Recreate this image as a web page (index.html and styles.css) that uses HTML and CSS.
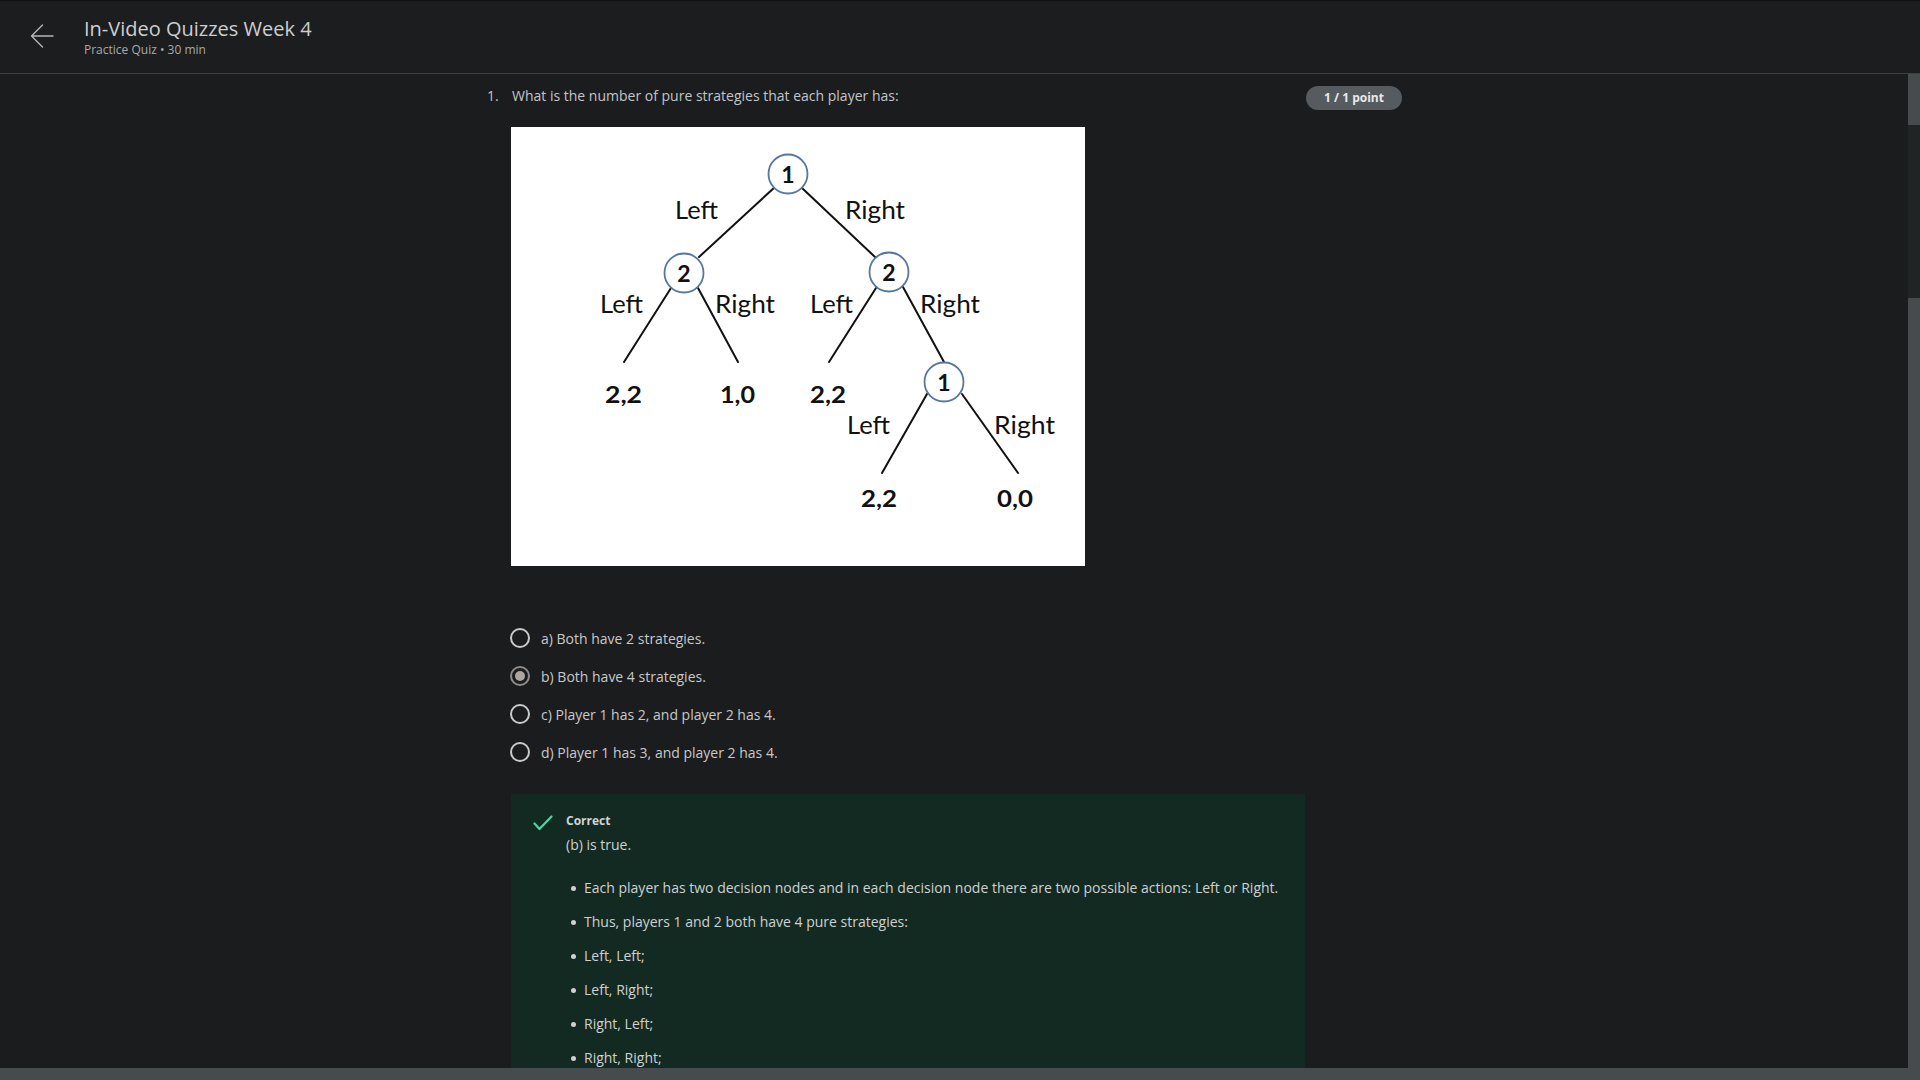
FILE: index.html
```html
<!DOCTYPE html>
<html lang="en">
<head>
<meta charset="utf-8">
<title>In-Video Quizzes Week 4</title>
<link rel="stylesheet" href="styles.css">
</head>
<body>
<header class="topbar">
  <div class="back">
    <svg width="24" height="24" viewBox="0 0 24 24" fill="none" stroke="#b4b6b8" stroke-width="1.4" stroke-linecap="round" stroke-linejoin="round"><path d="M1.5 12H23M12.5 1L1.5 12L12.5 23"/></svg>
  </div>
  <div class="titles">
    <div class="title">In-Video Quizzes Week 4</div>
    <div class="subtitle">Practice Quiz • 30 min</div>
  </div>
</header>
<div class="main">
  <div class="content">
    <div class="q-head">
      <div class="q-num">1.</div>
      <div class="q-text">What is the number of pure strategies that each player has:</div>
      <div class="badge">1 / 1 point</div>
    </div>
    <div class="q-body">
      <div class="figure">
        <svg width="574" height="439" viewBox="0 0 574 439">
          <rect width="574" height="439" fill="#ffffff"/>
          <g stroke="#111" stroke-width="2" stroke-linecap="round">
            <line x1="264" y1="60" x2="188" y2="130"/>
            <line x1="291" y1="61" x2="364" y2="130"/>
            <line x1="160" y1="161" x2="113" y2="235"/>
            <line x1="187" y1="161" x2="227" y2="235"/>
            <line x1="365" y1="161" x2="318" y2="235"/>
            <line x1="392" y1="160" x2="433" y2="235"/>
            <line x1="416" y1="267" x2="371" y2="346"/>
            <line x1="451" y1="267" x2="507" y2="346"/>
          </g>
          <g fill="#fff" stroke="#5577a0" stroke-width="1.8">
            <circle cx="277" cy="47" r="19.5"/>
            <circle cx="173" cy="146" r="19.5"/>
            <circle cx="378" cy="145" r="19.5"/>
            <circle cx="433" cy="255" r="19.5"/>
          </g>
          <g class="digit" text-anchor="middle">
            <text x="277" y="56">1</text>
            <text x="173" y="155">2</text>
            <text x="378" y="154">2</text>
            <text x="433" y="264">1</text>
          </g>
          <g class="lbl">
            <text x="164" y="92" textLength="43" lengthAdjust="spacingAndGlyphs">Left</text>
            <text x="334" y="92" textLength="60" lengthAdjust="spacingAndGlyphs">Right</text>
            <text x="89" y="186" textLength="43" lengthAdjust="spacingAndGlyphs">Left</text>
            <text x="204" y="186" textLength="60" lengthAdjust="spacingAndGlyphs">Right</text>
            <text x="299" y="186" textLength="43" lengthAdjust="spacingAndGlyphs">Left</text>
            <text x="409" y="186" textLength="60" lengthAdjust="spacingAndGlyphs">Right</text>
            <text x="336" y="307" textLength="43" lengthAdjust="spacingAndGlyphs">Left</text>
            <text x="483" y="307" textLength="61" lengthAdjust="spacingAndGlyphs">Right</text>
          </g>
          <g class="leaf">
            <text x="94" y="276" textLength="37" lengthAdjust="spacingAndGlyphs">2,2</text>
            <text x="209" y="276" textLength="35" lengthAdjust="spacingAndGlyphs">1,0</text>
            <text x="299" y="276" textLength="36" lengthAdjust="spacingAndGlyphs">2,2</text>
            <text x="350" y="380" textLength="36" lengthAdjust="spacingAndGlyphs">2,2</text>
            <text x="486" y="380" textLength="36" lengthAdjust="spacingAndGlyphs">0,0</text>
          </g>
        </svg>
      </div>
      <div class="options">
        <div class="option"><span class="radio"></span><span>a) Both have 2 strategies.</span></div>
        <div class="option"><span class="radio checked"></span><span>b) Both have 4 strategies.</span></div>
        <div class="option"><span class="radio"></span><span>c) Player 1 has 2, and player 2 has 4.</span></div>
        <div class="option"><span class="radio"></span><span>d) Player 1 has 3, and player 2 has 4.</span></div>
      </div>
      <div class="feedback">
        <div class="fb-icon">
          <svg width="20" height="16" viewBox="0 0 20 16" fill="none" stroke="#55d3a2" stroke-width="2.2" stroke-linecap="round" stroke-linejoin="round"><path d="M1.5 8.5L6.5 14L18.5 1.5"/></svg>
        </div>
        <div class="fb-body">
          <div class="fb-title">Correct</div>
          <p class="fb-text">(b) is true.</p>
          <ul class="fb-list">
            <li>Each player has two decision nodes and in each decision node there are two possible actions: Left or Right.</li>
            <li>Thus, players 1 and 2 both have 4 pure strategies:</li>
            <li>Left, Left;</li>
            <li>Left, Right;</li>
            <li>Right, Left;</li>
            <li>Right, Right;</li>
            <li>&nbsp;</li>
          </ul>
        </div>
      </div>
    </div>
  </div>
  <div class="vscroll"><div class="vthumb"></div></div>
</div>
<div class="hbar"></div>
</body>
</html>
```
FILE: styles.css
```css
* { box-sizing: border-box; }
html, body { margin: 0; padding: 0; }
body {
  width: 1920px;
  height: 1080px;
  overflow: hidden;
  background: #1b1c1e;
  font-family: "Open Sans", "Noto Sans", sans-serif;
  color: #c6c8ca;
  display: flex;
  flex-direction: column;
}
.topbar {
  height: 74px;
  flex: none;
  display: flex;
  align-items: flex-start;
  background: #1c1d1f;
  border-top: 1px solid #0f1011;
  border-bottom: 1px solid #3c3f42;
}
.back {
  width: 24px;
  height: 24px;
  margin: 23px 0 0 30px;
  display: flex;
}
.titles {
  margin-left: 30px;
  padding-top: 15px;
}
.title {
  font-size: 20px;
  line-height: 26px;
  color: #cdced0;
}
.subtitle {
  font-size: 12px;
  line-height: 16px;
  color: #a7a9ab;
}
.main {
  flex: 1;
  display: flex;
  min-height: 0;
}
.content {
  flex: 1;
  overflow: hidden;
  padding: 10px 0 0 487px;
}
.vscroll {
  width: 12px;
  flex: none;
  background: #464b4e;
}
.vthumb {
  margin-top: 51px;
  height: 173px;
  background: #212425;
}
.hbar {
  height: 12px;
  flex: none;
  background: #464b4e;
}
.q-head {
  display: flex;
  align-items: flex-start;
  width: 915px;
}
.q-num {
  width: 25px;
  font-size: 14px;
  line-height: 24px;
  color: #c3c5c7;
}
.q-text {
  flex: 1;
  font-size: 14px;
  line-height: 24px;
  color: #c3c5c7;
}
.badge {
  margin-top: 2px;
  width: 96px;
  height: 24px;
  border-radius: 12px;
  background: #555b5f;
  color: #e9eaea;
  font-size: 12px;
  font-weight: 700;
  line-height: 24px;
  text-align: center;
}
.q-body {
  margin-left: 24px;
}
.figure {
  margin-top: 17px;
  width: 574px;
  height: 439px;
  display: flex;
}
.figure .lbl text {
  font-family: Lato, "Open Sans", sans-serif;
  font-size: 25px;
  fill: #111;
}
.figure .leaf text {
  font-family: Lato, "Open Sans", sans-serif;
  font-size: 23px;
  font-weight: 700;
  fill: #111;
}
.figure .digit text {
  font-family: Lato, "Open Sans", sans-serif;
  font-size: 23px;
  font-weight: 700;
  fill: #111;
}
.options {
  margin-top: 53px;
  margin-left: -1px;
}
.option {
  height: 38px;
  display: flex;
  align-items: center;
  font-size: 14px;
  color: #c8c9ca;
}
.radio {
  width: 20px;
  height: 20px;
  border: 2px solid #c9cacb;
  border-radius: 50%;
  margin-right: 11px;
  flex: none;
  display: flex;
  align-items: center;
  justify-content: center;
}
.radio.checked {
  border-color: #8f8c88;
}
.radio.checked::after {
  content: "";
  width: 10px;
  height: 10px;
  border-radius: 50%;
  background: #aba69e;
}
.feedback {
  margin-top: 23px;
  width: 794px;
  background: #132a23;
  padding: 19px 22px 30px 22px;
  display: flex;
}
.fb-icon {
  width: 33px;
  flex: none;
  padding-top: 1px;
}
.fb-body {
  flex: 1;
}
.fb-title {
  font-size: 12px;
  font-weight: 700;
  line-height: 16px;
  color: #d2d3d3;
}
.fb-text {
  margin: 6px 0 0 0;
  font-size: 14px;
  line-height: 20px;
  color: #cfd1d0;
}
.fb-list {
  list-style: none;
  margin: 23px 0 0 0;
  padding: 0 0 0 5px;
}
.fb-list li {
  display: flex;
  align-items: center;
  font-size: 14px;
  line-height: 20px;
  color: #cfd1d0;
  margin-bottom: 14px;
}
.fb-list li::before {
  content: "";
  width: 5px;
  height: 5px;
  border-radius: 50%;
  background: #cfd1d0;
  margin-right: 8px;
  flex: none;
}
```
